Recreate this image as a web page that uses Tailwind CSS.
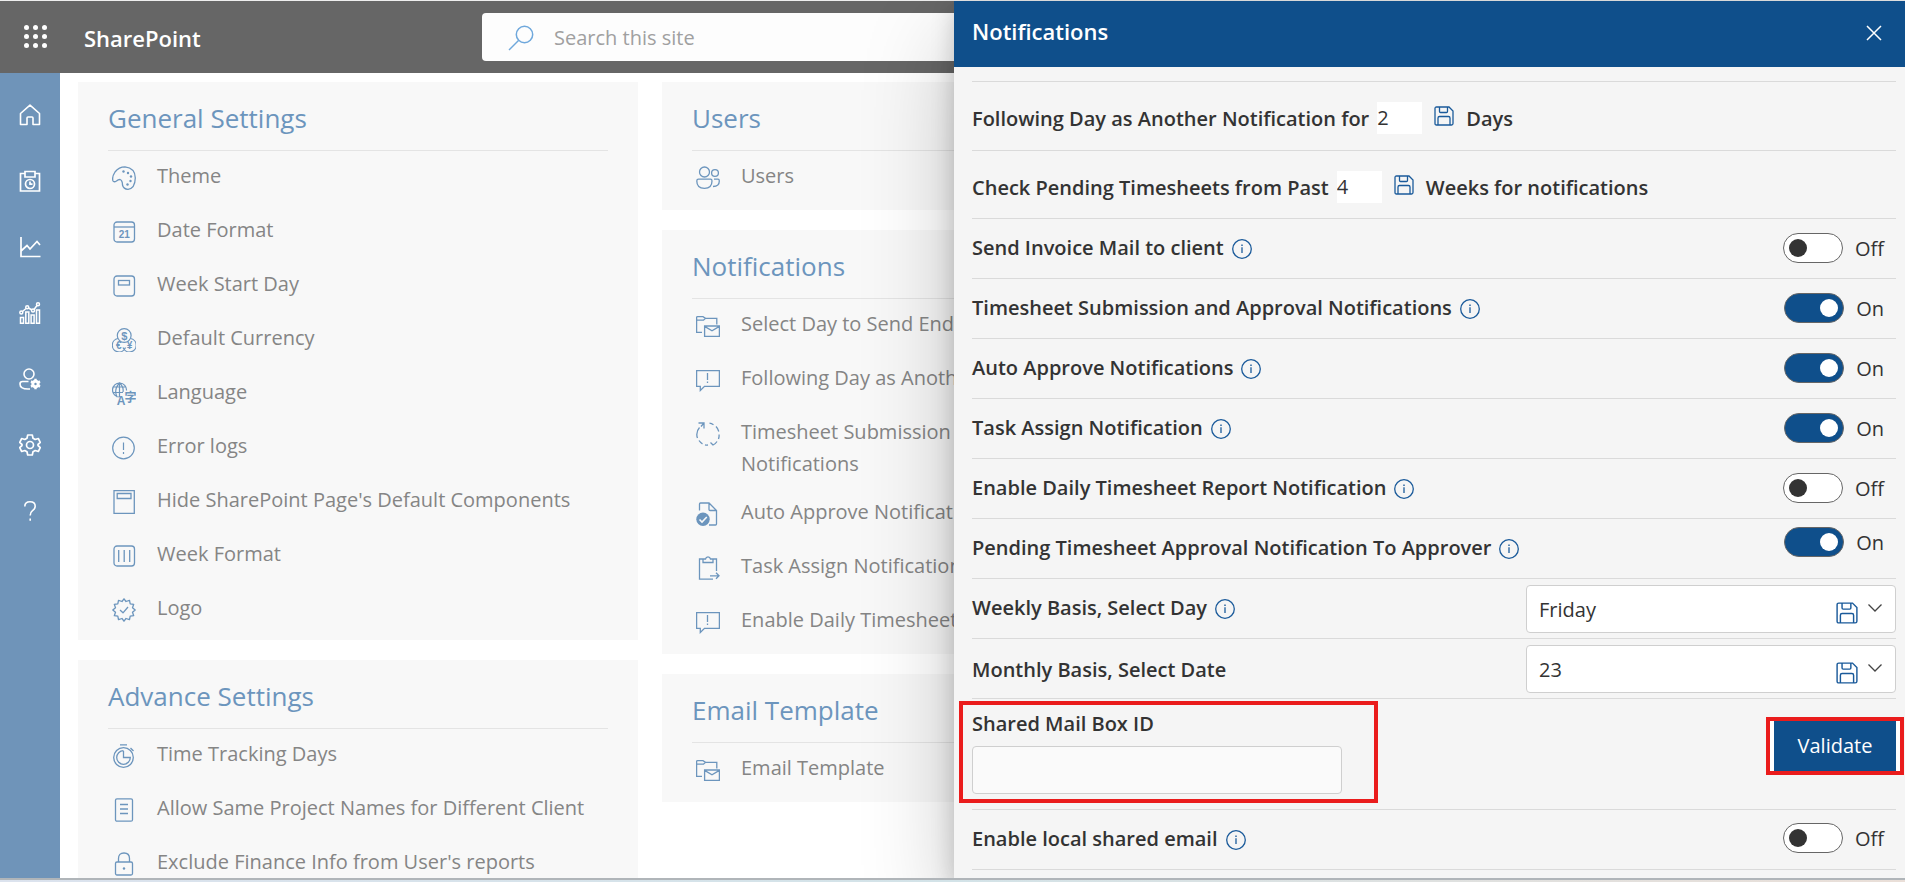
<!DOCTYPE html>
<html lang="en">
<head>
<meta charset="utf-8">
<title>SharePoint</title>
<script src="https://cdn.jsdelivr.net/npm/@tailwindcss/browser@4"></script>
</head>
<body class="h-screen overflow-hidden bg-white font-['Open_Sans','Noto_Sans',sans-serif] text-[#333]">

<svg class="hidden" aria-hidden="true">
  <symbol id="i-info" viewBox="0 0 20 20" fill="none" stroke="currentColor"><circle cx="10" cy="10" r="9.3" stroke-width="1.3"/><path d="M10 8.2V14" stroke-width="1.3"/><path d="M10 5.4V7" stroke-width="1.4"/></symbol>
  <symbol id="i-save" viewBox="0 0 20 20" fill="none" stroke="currentColor" stroke-width="1.3"><path d="M2.5 1H15L19 5V17.5Q19 19 17.5 19H2.5Q1 19 1 17.5V2.5Q1 1 2.5 1ZM5.5 1V5.5Q5.5 6.5 6.5 6.5H12.5Q13.5 6.5 13.5 5.5V1M4 19V12Q4 10.5 5.5 10.5H14.5Q16 10.5 16 12V19"/></symbol>
  <symbol id="i-folder" viewBox="0 0 24 24" fill="none" stroke="currentColor" stroke-width="1.3"><path d="M6 18.400H.6V3.600Q.6 2.600 1.600 2.600H7L9.500 4.300H20.800V10.500M.6 6.200H7.500L9.500 4.300M8.600 12H23.400V22.400H8.600ZM8.600 12.400L16 16.800L23.400 12.400"/></symbol>
  <symbol id="i-chat" viewBox="0 0 24 24" fill="none" stroke="currentColor" stroke-width="1.300"><path d="M.6 2.600H23.400V18.400H8.500L4.300 22.500V18.400H.6ZM11.500 5V12M11.500 13.500V15"/></symbol>
</svg>

<div class="flex h-full flex-col">
  <header class="flex h-[73px] shrink-0 items-center border-t border-[#eee] bg-[#666] text-white">
    <button class="ml-6 text-white" aria-label="App launcher">
      <svg class="size-6" viewBox="0 0 24 24" fill="currentColor"><circle cx="2.500" cy="2.500" r="2.500"/><circle cx="11.500" cy="2.500" r="2.500"/><circle cx="20.500" cy="2.500" r="2.500"/><circle cx="2.500" cy="11.500" r="2.500"/><circle cx="11.500" cy="11.500" r="2.500"/><circle cx="20.500" cy="11.500" r="2.500"/><circle cx="2.500" cy="20.500" r="2.500"/><circle cx="11.500" cy="20.500" r="2.500"/><circle cx="20.500" cy="20.500" r="2.500"/></svg>
    </button>
    <a href="#" class="ml-9 w-[398px] pt-0.5 text-[22px] font-semibold">SharePoint</a>
    <label class="flex h-12 w-[940px] items-center gap-5 rounded bg-[#fdfdfd] pl-6">
      <svg class="size-7 text-[#6fa8dc]" viewBox="0 0 28 28" fill="none" stroke="currentColor" stroke-width="1.500" aria-hidden="true"><circle cx="18.500" cy="11.500" r="8.200"/><path d="M12.500 17.500L3 27"/></svg>
      <input type="text" aria-label="Search this site" placeholder="Search this site" class="grow bg-transparent pt-0.5 text-xl outline-none placeholder:text-[#a0a0a0]">
    </label>
  </header>

  <div class="flex min-h-0 grow">
    <nav class="flex w-15 shrink-0 flex-col items-center gap-11 bg-[#6f94b9] pt-[31px] text-white" aria-label="Main">
      <a href="#" aria-label="Home"><svg class="size-[22px]" viewBox="0 0 22 22" fill="none" stroke="currentColor" stroke-width="1.600" stroke-linejoin="round"><path d="M1.500 9.500L11 1.200L20.500 9.500V20.500H14V14Q14 13 13 13H9Q8 13 8 14V20.500H1.500Z"/></svg></a>
      <a href="#" aria-label="Timesheet"><svg class="size-[22px]" viewBox="0 0 22 22" fill="none" stroke="currentColor" stroke-width="1.700"><path d="M6 3.500H1.500V21H20.500V3.500H16M6 1.500H16V7H6Z"/><circle cx="11" cy="14" r="4.500"/><path d="M11 11.500V14.200H13.500"/></svg></a>
      <a href="#" aria-label="Reports"><svg class="size-[22px]" viewBox="0 0 22 22" fill="none" stroke="currentColor" stroke-width="1.700"><path d="M2 1V20.500H21.500M2 15L8 9.500L11 13L18 5.500L21 9"/></svg></a>
      <a href="#" aria-label="Analytics"><svg class="size-[22px]" viewBox="0 0 22 22" fill="none" stroke="currentColor" stroke-width="1.500"><path d="M1.500 15.500H4.500V21.300H1.500ZM6.800 10H9.800V21.300H6.800ZM12.100 13H15.100V21.300H12.100ZM17.500 8H20.500V21.300H17.500ZM3.500 9.500L7 6.500M9.500 6L13 8M15 7.500L18 3.500"/><circle cx="2.300" cy="10.500" r="1.500"/><circle cx="8.200" cy="5.300" r="1.500"/><circle cx="14" cy="8.500" r="1.500"/><circle cx="19" cy="2.300" r="1.500"/></svg></a>
      <a href="#" aria-label="User settings"><svg class="size-[22px]" viewBox="0 0 22 22" fill="none" stroke="currentColor" stroke-width="1.600"><circle cx="10" cy="6" r="5"/><path d="M9.500 13.500H3.500Q1 13.500 1 16Q1 21 9 21H11"/><circle cx="16.500" cy="16" r="2.700" stroke-width="3"/><path d="M16.500 10.800V13M16.500 19V21.200M12 13.400L14 14.500M19 17.500L21 18.600M12 18.600L14 17.500M19 14.500L21 13.400" stroke-width="2.400"/></svg></a>
      <a href="#" aria-label="Settings"><svg class="size-[22px]" viewBox="0 0 22 22" fill="none" stroke="currentColor" stroke-width="1.700" stroke-linejoin="round"><path d="M8.700 1H13.300L14 4.200L16.200 5.500L19.300 4.500L21.300 8.400L19 10.500V11.500L21.300 13.600L19.300 17.500L16.200 16.500L14 17.800L13.300 21H8.700L8 17.800L5.800 16.500L2.700 17.500L.7 13.600L3 11.500V10.500L.7 8.400L2.700 4.500L5.800 5.500L8 4.200Z"/><circle cx="11" cy="11" r="3.500"/></svg></a>
      <a href="#" aria-label="Help"><svg class="size-[22px]" viewBox="0 0 22 22" fill="none" stroke="currentColor" stroke-width="1.600"><path d="M5.800 6.500Q5.800 1.800 11 1.800Q16.200 1.800 16.200 6.300Q16.200 8.700 13.500 10.700Q11.200 12.400 11.200 15.500M11.200 18.500V20.800"/></svg></a>
    </nav>

    <main class="grid grow grid-cols-3 items-start gap-x-6 overflow-hidden pt-[9px] pr-[99px] pl-[18px] text-[#858585]">
      <div class="flex flex-col gap-5">
        <section class="bg-[#f8f8f8] px-[30px] pb-2.5">
          <h2 class="border-b border-[#e4e4e4] pt-[18px] pb-3.5 text-[26px] leading-9 text-[#6c95bd]">General Settings</h2>
          <ul class="flex flex-col gap-4 pt-[9px] pl-1 text-[20px] leading-8 [&_a]:flex [&_a]:min-h-[38px] [&_a]:gap-[21px] [&_svg]:mt-1.5 [&_svg]:size-6 [&_svg]:shrink-0 [&_svg]:text-[#6c95bd]">
            <li><a href="#"><svg viewBox="0 0 24 24" fill="none" stroke="currentColor" stroke-width="1.300"><path d="M1 15Q-.3 11 3 6Q7 .8 13 .8Q23.300 2 23.300 12Q23 22.500 16 23.300Q11.500 23.300 10.500 19Q10.500 14.500 8 13.500Q6 13.500 4.500 15Q2 16.500 1 15Z"/><g fill="currentColor" stroke="none"><circle cx="11.500" cy="5.500" r="1.200"/><circle cx="16" cy="7" r="1.200"/><circle cx="19" cy="10.500" r="1.200"/><circle cx="18.500" cy="15" r="1.200"/><circle cx="15.500" cy="18.500" r="1.200"/></g></svg>Theme</a></li>
            <li><a href="#"><svg viewBox="0 0 24 24" fill="none" stroke="currentColor" stroke-width="1.300"><rect x="2" y="2" width="20.500" height="20" rx="3"/><path d="M2 7H22.500"/><text x="12.200" y="18" text-anchor="middle" font-family="Liberation Sans" font-size="10" font-weight="700" fill="currentColor" stroke="none">21</text></svg>Date Format</a></li>
            <li><a href="#"><svg viewBox="0 0 24 24" fill="none" stroke="currentColor" stroke-width="1.300"><rect x="2" y="2" width="20.500" height="20" rx="3"/><rect x="6.500" y="6.500" width="11" height="4.500"/></svg>Week Start Day</a></li>
            <li><a href="#"><svg viewBox="0 0 24 24" fill="none" stroke="currentColor" stroke-width="1.200"><circle cx="12.200" cy="7.500" r="6.900"/><path d="M6 10.500A6.800 6.800 0 1 0 13.500 19.500M18.500 10.500A6.800 6.800 0 1 1 11 19.500"/><g font-family="Liberation Sans" font-weight="700" fill="currentColor" stroke="none" text-anchor="middle"><text x="12.200" y="11.500" font-size="11">$</text><text x="6.800" y="20.500" font-size="10">€</text><text x="17.500" y="20.500" font-size="10">¥</text></g></svg>Default Currency</a></li>
            <li><a href="#"><svg viewBox="0 0 24 24" fill="none" stroke="currentColor" stroke-width="1.200"><path d="M14.500 8.500A7 7 0 1 0 7.500 15M1 5H14M1 10.500H11M7.500 1V15M7.500 1Q1.500 7.500 5 15M7.500 1Q12 5 11 10"/><g fill="currentColor" stroke="none" text-anchor="middle"><text x="9" y="23" font-family="Liberation Sans" font-size="12" font-weight="700">A</text><text x="18.500" y="20" font-family="Noto Sans CJK JP" font-size="12" font-weight="700">字</text></g></svg>Language</a></li>
            <li><a href="#"><svg viewBox="0 0 24 24" fill="none" stroke="currentColor" stroke-width="1.200"><circle cx="11.500" cy="12" r="10.800"/><path d="M11.500 6.500V14M11.500 16V18"/></svg>Error logs</a></li>
            <li><a href="#"><svg viewBox="0 0 24 24" fill="none" stroke="currentColor" stroke-width="1.300"><path d="M2 .7H22.300V23.300H2ZM5.200 3.500H19V8.500H5.200Z"/></svg>Hide SharePoint Page's Default Components</a></li>
            <li><a href="#"><svg viewBox="0 0 24 24" fill="none" stroke="currentColor" stroke-width="1.300"><rect x="2" y="2" width="20.500" height="20" rx="3"/><path d="M6.700 6V18M12.200 6V18M17.700 6V18"/></svg>Week Format</a></li>
            <li><a href="#"><svg viewBox="0 0 24 24" fill="none" stroke="currentColor" stroke-width="1.300" stroke-linejoin="round"><path d="M12 .8L14 3.500L17.500 2.300L18.200 5.800L21.700 6.300L20.500 9.700L23.200 12L20.500 14.300L21.700 17.700L18.200 18.200L17.500 21.700L14 20.500L12 23.200L10 20.500L6.500 21.700L5.800 18.200L2.300 17.700L3.500 14.300L.8 12L3.500 9.700L2.300 6.300L5.800 5.800L6.500 2.300L10 3.500ZM8 12L11 14.800L16 9"/></svg>Logo</a></li>
          </ul>
        </section>
        <section class="bg-[#f8f8f8] px-[30px] pb-2.5">
          <h2 class="border-b border-[#e4e4e4] pt-[18px] pb-3.5 text-[26px] leading-9 text-[#6c95bd]">Advance Settings</h2>
          <ul class="flex flex-col gap-4 pt-[9px] pl-1 text-[20px] leading-8 [&_a]:flex [&_a]:min-h-[38px] [&_a]:gap-[21px] [&_svg]:mt-1.5 [&_svg]:size-6 [&_svg]:shrink-0 [&_svg]:text-[#6c95bd]">
            <li><a href="#"><svg viewBox="0 0 24 24" fill="none" stroke="currentColor" stroke-width="1.300"><circle cx="11.500" cy="13.500" r="9.800"/><path d="M11.500 6.700A6.800 6.800 0 1 0 18.300 13.500H11.500V7M8 .8H15M18.500 4L21.500 7"/></svg>Time Tracking Days</a></li>
            <li><a href="#"><svg viewBox="0 0 24 24" fill="none" stroke="currentColor" stroke-width="1.300"><rect x="3.500" y=".8" width="17" height="22.400" rx="1.500"/><path d="M8 6.500H16M8 11H16M8 15.500H16"/></svg>Allow Same Project Names for Different Client</a></li>
            <li><a href="#"><svg viewBox="0 0 24 24" fill="none" stroke="currentColor" stroke-width="1.300"><rect x="3.500" y="10" width="17" height="13" rx="1.500"/><path d="M6.500 10V6.500Q6.500 1 12 1Q17.500 1 17.500 6.500V10"/><circle cx="12" cy="16.500" r="1.200" fill="currentColor" stroke="none"/></svg>Exclude Finance Info from User's reports</a></li>
          </ul>
        </section>
      </div>

      <div class="flex flex-col gap-5">
        <section class="bg-[#f8f8f8] px-[30px] pb-3">
          <h2 class="border-b border-[#e4e4e4] pt-[18px] pb-3.5 text-[26px] leading-9 text-[#6c95bd]">Users</h2>
          <ul class="flex flex-col gap-4 pt-[9px] pl-1 text-[20px] leading-8 [&_a]:flex [&_a]:min-h-[38px] [&_a]:gap-[21px] [&_svg]:mt-1.5 [&_svg]:size-6 [&_svg]:shrink-0 [&_svg]:text-[#6c95bd]">
            <li><a href="#"><svg viewBox="0 0 24 24" fill="none" stroke="currentColor" stroke-width="1.300"><circle cx="8.500" cy="6" r="5"/><circle cx="19" cy="7" r="3.400"/><path d="M2.500 13.200H14.500Q16 13.200 16 15Q16 22.300 8.500 22.300Q.8 22.300 .8 15Q.8 13.200 2.500 13.200ZM18 13.200H22Q23.300 13.200 23.300 15Q23.300 20.500 17 20.500"/></svg>Users</a></li>
          </ul>
        </section>
        <section class="bg-[#f8f8f8] px-[30px] pb-3">
          <h2 class="border-b border-[#e4e4e4] pt-[18px] pb-3.5 text-[26px] leading-9 text-[#6c95bd]">Notifications</h2>
          <ul class="flex flex-col gap-4 pt-[9px] pl-1 text-[20px] leading-8 [&_a]:flex [&_a]:min-h-[38px] [&_a]:gap-[21px] [&_svg]:mt-1.5 [&_svg]:size-6 [&_svg]:shrink-0 [&_svg]:text-[#6c95bd]">
            <li><a href="#"><svg><use href="#i-folder"/></svg>Select Day to Send End</a></li>
            <li><a href="#"><svg><use href="#i-chat"/></svg>Following Day as Another</a></li>
            <li><a href="#"><svg viewBox="0 0 24 24" fill="none" stroke="currentColor" stroke-width="1.300"><path d="M2.500 1H8V6.500M8 1L5 4.500M3.500 5.500Q.8 8.500 .8 12.500Q.8 14.500 1.500 16M3 18.500Q4.500 20.800 6.500 21.800M9 22.800Q10.500 23.200 12 23M14.500 20.500L17 23Q19.500 21.800 21 19.500M22.500 17Q23.300 14.500 23.100 12.500M22.800 9.500Q22 6.500 20 4.500M17.500 2.800Q15.500 1.500 13.500 1.200"/></svg><span>Timesheet Submission<br>Notifications</span></a></li>
            <li><a href="#"><svg viewBox="0 0 24 24" fill="none" stroke="currentColor" stroke-width="1.300"><path d="M3.500 8.500V2Q3.500 1 4.500 1H13L20.500 8.500V22Q20.500 23 19.500 23H13M13 1V7.500Q13 8.500 14 8.500H20.500"/><circle cx="7" cy="17.300" r="6.700" fill="currentColor" stroke="none"/><path d="M3.500 17.500L6 20L10.800 15" stroke="#f8f8f8" stroke-width="1.600"/></svg>Auto Approve Notifications</a></li>
            <li><a href="#"><svg viewBox="0 0 24 24" fill="none" stroke="currentColor" stroke-width="1.300"><path d="M7 3H3.500V23.200H17M17 3H20.500V15M7 6.500V3H9.500Q10 .8 12 .8Q14 .8 14.500 3H17V6.500ZM14 19.800H23M20 16.800L23 19.800L20 22.800"/></svg>Task Assign Notification</a></li>
            <li><a href="#"><svg><use href="#i-chat"/></svg>Enable Daily Timesheet</a></li>
          </ul>
        </section>
        <section class="bg-[#f8f8f8] px-[30px] pb-3">
          <h2 class="border-b border-[#e4e4e4] pt-[18px] pb-3.5 text-[26px] leading-9 text-[#6c95bd]">Email Template</h2>
          <ul class="flex flex-col gap-4 pt-[9px] pl-1 text-[20px] leading-8 [&_a]:flex [&_a]:min-h-[38px] [&_a]:gap-[21px] [&_svg]:mt-1.5 [&_svg]:size-6 [&_svg]:shrink-0 [&_svg]:text-[#6c95bd]">
            <li><a href="#"><svg><use href="#i-folder"/></svg>Email Template</a></li>
          </ul>
        </section>
      </div>
    </main>
  </div>
  <div class="z-20 h-1 shrink-0 border-t-2 border-[#b0b5b9] bg-linear-to-r from-[#dce3ee] via-[#d3e3e8] to-[#eadfd8]"></div>
</div>

<aside role="dialog" aria-labelledby="panel-title" class="absolute top-px right-0 bottom-1 z-10 w-[951px] bg-[#f5f5f5] shadow-[0_38px_86px_rgb(0_0_0/0.22),0_7px_22px_rgb(0_0_0/0.18)]">
  <div class="flex h-[66px] items-start justify-between bg-[#0f4f8b] pt-3.5 pr-[23px] pl-[18px] text-white">
    <h2 id="panel-title" class="text-[22px] leading-8 font-semibold">Notifications</h2>
    <button class="mt-2.5" aria-label="Close"><svg class="size-4" viewBox="0 0 16 16" fill="none" stroke="currentColor" stroke-width="1.500"><path d="M1 1L15 15M15 1L1 15"/></svg></button>
  </div>
  <div class="pt-3.5 pr-[9px] pl-[18px] text-[20px] leading-8">
    <div class="flex h-[69px] items-start border-t border-[#dadada] pt-5 font-semibold">
      <label for="days" class="pt-px">Following Day as Another Notification for</label>
      <input id="days" type="text" value="2" class="ml-2 h-8 w-[45px] bg-white font-medium outline-none">
      <button class="mt-1 ml-3 text-[#1a5a9a]" aria-label="Save days"><svg class="size-5"><use href="#i-save"/></svg></button>
      <span class="ml-3 pt-px">Days</span>
    </div>
    <div class="flex h-[68px] items-start border-t border-[#dadada] pt-5 font-semibold">
      <label for="weeks" class="pt-px">Check Pending Timesheets from Past</label>
      <input id="weeks" type="text" value="4" class="ml-2 h-8 w-[45px] bg-white font-medium outline-none">
      <button class="mt-1 ml-3 text-[#1a5a9a]" aria-label="Save weeks"><svg class="size-5"><use href="#i-save"/></svg></button>
      <span class="ml-3 pt-px">Weeks for notifications</span>
    </div>
    <div class="flex h-15 items-start border-t border-[#dadada] pt-[13px]">
      <span id="l1" class="font-semibold">Send Invoice Mail to client</span>
      <svg class="mt-[7px] ml-2 size-5 text-[#1a5a9a]"><use href="#i-info"/></svg>
      <label class="mt-px mr-3 ml-auto flex gap-3"><input type="checkbox" role="switch" aria-labelledby="l1" class="flex h-[30px] w-15 appearance-none items-center rounded-full border border-[#666] bg-white px-[5px] before:size-[18px] before:rounded-full before:bg-[#333] checked:justify-end checked:bg-[#0f4f8b] checked:before:bg-white"><span>Off</span></label>
    </div>
    <div class="flex h-15 items-start border-t border-[#dadada] pt-[13px]">
      <span id="l2" class="font-semibold">Timesheet Submission and Approval Notifications</span>
      <svg class="mt-[7px] ml-2 size-5 text-[#1a5a9a]"><use href="#i-info"/></svg>
      <label class="mt-px mr-3 ml-auto flex gap-3"><input type="checkbox" role="switch" checked aria-labelledby="l2" class="flex h-[30px] w-15 appearance-none items-center rounded-full border border-[#666] bg-white px-[5px] before:size-[18px] before:rounded-full before:bg-[#333] checked:justify-end checked:bg-[#0f4f8b] checked:before:bg-white"><span>On</span></label>
    </div>
    <div class="flex h-15 items-start border-t border-[#dadada] pt-[13px]">
      <span id="l3" class="font-semibold">Auto Approve Notifications</span>
      <svg class="mt-[7px] ml-2 size-5 text-[#1a5a9a]"><use href="#i-info"/></svg>
      <label class="mt-px mr-3 ml-auto flex gap-3"><input type="checkbox" role="switch" checked aria-labelledby="l3" class="flex h-[30px] w-15 appearance-none items-center rounded-full border border-[#666] bg-white px-[5px] before:size-[18px] before:rounded-full before:bg-[#333] checked:justify-end checked:bg-[#0f4f8b] checked:before:bg-white"><span>On</span></label>
    </div>
    <div class="flex h-15 items-start border-t border-[#dadada] pt-[13px]">
      <span id="l4" class="font-semibold">Task Assign Notification</span>
      <svg class="mt-[7px] ml-2 size-5 text-[#1a5a9a]"><use href="#i-info"/></svg>
      <label class="mt-px mr-3 ml-auto flex gap-3"><input type="checkbox" role="switch" checked aria-labelledby="l4" class="flex h-[30px] w-15 appearance-none items-center rounded-full border border-[#666] bg-white px-[5px] before:size-[18px] before:rounded-full before:bg-[#333] checked:justify-end checked:bg-[#0f4f8b] checked:before:bg-white"><span>On</span></label>
    </div>
    <div class="flex h-15 items-start border-t border-[#dadada] pt-[13px]">
      <span id="l5" class="font-semibold">Enable Daily Timesheet Report Notification</span>
      <svg class="mt-[7px] ml-2 size-5 text-[#1a5a9a]"><use href="#i-info"/></svg>
      <label class="mt-px mr-3 ml-auto flex gap-3"><input type="checkbox" role="switch" aria-labelledby="l5" class="flex h-[30px] w-15 appearance-none items-center rounded-full border border-[#666] bg-white px-[5px] before:size-[18px] before:rounded-full before:bg-[#333] checked:justify-end checked:bg-[#0f4f8b] checked:before:bg-white"><span>Off</span></label>
    </div>
    <div class="flex h-15 items-start border-t border-[#dadada] pt-2">
      <span id="l6" class="mt-[5px] font-semibold">Pending Timesheet Approval Notification To Approver</span>
      <svg class="mt-3 ml-2 size-5 text-[#1a5a9a]"><use href="#i-info"/></svg>
      <label class="mr-3 ml-auto flex gap-3"><input type="checkbox" role="switch" checked aria-labelledby="l6" class="flex h-[30px] w-15 appearance-none items-center rounded-full border border-[#666] bg-white px-[5px] before:size-[18px] before:rounded-full before:bg-[#333] checked:justify-end checked:bg-[#0f4f8b] checked:before:bg-white"><span>On</span></label>
    </div>
    <div class="flex h-15 items-start border-t border-[#dadada] pt-1.5">
      <label for="wd" class="mt-[7px] font-semibold">Weekly Basis, Select Day</label>
      <svg class="mt-3.5 ml-2 size-5 text-[#1a5a9a]"><use href="#i-info"/></svg>
      <div class="relative ml-auto">
        <select id="wd" class="h-12 w-[370px] appearance-none rounded-sm border border-[#cfcfcf] bg-white px-3 pt-px"><option>Friday</option></select>
        <button class="absolute top-[17px] right-[38px] text-[#1a5a9a]" aria-label="Save day"><svg class="size-[22px]"><use href="#i-save"/></svg></button>
        <svg class="pointer-events-none absolute top-[15px] right-[13px] size-4 text-[#444]" viewBox="0 0 16 16" fill="none" stroke="currentColor" stroke-width="1.300"><path d="M1.500 4.500L8 11L14.500 4.500"/></svg>
      </div>
    </div>
    <div class="flex h-15 items-start border-t border-[#dadada] pt-1.5">
      <label for="md" class="mt-[9px] font-semibold">Monthly Basis, Select Date</label>
      <div class="relative ml-auto">
        <select id="md" class="h-12 w-[370px] appearance-none rounded-sm border border-[#cfcfcf] bg-white px-3 pt-px"><option>23</option></select>
        <button class="absolute top-[17px] right-[38px] text-[#1a5a9a]" aria-label="Save date"><svg class="size-[22px]"><use href="#i-save"/></svg></button>
        <svg class="pointer-events-none absolute top-[15px] right-[13px] size-4 text-[#444]" viewBox="0 0 16 16" fill="none" stroke="currentColor" stroke-width="1.300"><path d="M1.500 4.500L8 11L14.500 4.500"/></svg>
      </div>
    </div>
    <div class="flex h-[111px] items-start justify-between border-t border-[#dadada] pt-0.5">
      <div class="-ml-[13px] flex h-[102px] w-[419px] flex-col border-4 border-[#ea1c1c] px-[9px] pt-[5px]">
        <label for="mb" class="mb-2 leading-7 font-semibold">Shared Mail Box ID</label>
        <input id="mb" type="text" class="h-12 w-[370px] rounded-sm border border-[#cfcfcf] bg-[#fafafa] px-3">
      </div>
      <div class="mt-4 -mr-2 border-4 border-[#ea1c1c] bg-white px-1">
        <button class="h-[50px] w-[122px] bg-[#0f4f8b] font-medium text-white">Validate</button>
      </div>
    </div>
    <div class="flex h-15 items-start border-t border-[#dadada] pt-[13px]">
      <span id="l7" class="font-semibold">Enable local shared email</span>
      <svg class="mt-[7px] ml-2 size-5 text-[#1a5a9a]"><use href="#i-info"/></svg>
      <label class="mr-3 ml-auto flex gap-3"><input type="checkbox" role="switch" aria-labelledby="l7" class="flex h-[30px] w-15 appearance-none items-center rounded-full border border-[#666] bg-white px-[5px] before:size-[18px] before:rounded-full before:bg-[#333] checked:justify-end checked:bg-[#0f4f8b] checked:before:bg-white"><span>Off</span></label>
    </div>
    <hr class="border-[#dadada]">
  </div>
</aside>
</body>
</html>
